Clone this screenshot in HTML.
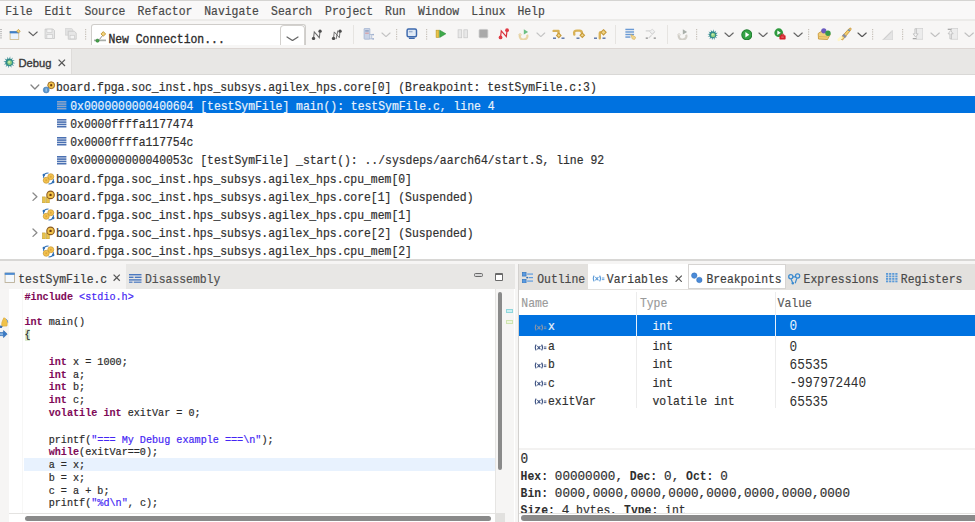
<!DOCTYPE html>
<html><head><meta charset="utf-8"><style>
html,body{margin:0;padding:0;}
body{width:975px;height:522px;overflow:hidden;position:relative;background:#f6f5f4;}
body>div,body>svg{position:absolute;}
.t{white-space:pre;line-height:20px;height:20px;-webkit-text-stroke:0.18px currentColor;}
</style></head><body>
<div style="left:0px;top:0px;width:975px;height:1px;background:#d5d4d2;"></div>
<div style="left:0px;top:1px;width:975px;height:18px;background:#f9f8f8;"></div>
<div style="left:0px;top:19px;width:975px;height:1.5px;background:#ecebe9;"></div>
<div class="t" style="left:5.20px;top:1.86px;font-size:11.42px;color:#484848;font-family:'Liberation Mono', monospace;font-weight:normal;transform:scaleY(1.08);transform-origin:0 13.04px;">File</div>
<div class="t" style="left:44.60px;top:1.86px;font-size:11.42px;color:#484848;font-family:'Liberation Mono', monospace;font-weight:normal;transform:scaleY(1.08);transform-origin:0 13.04px;">Edit</div>
<div class="t" style="left:84.40px;top:1.86px;font-size:11.42px;color:#484848;font-family:'Liberation Mono', monospace;font-weight:normal;transform:scaleY(1.08);transform-origin:0 13.04px;">Source</div>
<div class="t" style="left:137.60px;top:1.86px;font-size:11.42px;color:#484848;font-family:'Liberation Mono', monospace;font-weight:normal;transform:scaleY(1.08);transform-origin:0 13.04px;">Refactor</div>
<div class="t" style="left:204.20px;top:1.86px;font-size:11.42px;color:#484848;font-family:'Liberation Mono', monospace;font-weight:normal;transform:scaleY(1.08);transform-origin:0 13.04px;">Navigate</div>
<div class="t" style="left:271.10px;top:1.86px;font-size:11.42px;color:#484848;font-family:'Liberation Mono', monospace;font-weight:normal;transform:scaleY(1.08);transform-origin:0 13.04px;">Search</div>
<div class="t" style="left:325.10px;top:1.86px;font-size:11.42px;color:#484848;font-family:'Liberation Mono', monospace;font-weight:normal;transform:scaleY(1.08);transform-origin:0 13.04px;">Project</div>
<div class="t" style="left:385.10px;top:1.86px;font-size:11.42px;color:#484848;font-family:'Liberation Mono', monospace;font-weight:normal;transform:scaleY(1.08);transform-origin:0 13.04px;">Run</div>
<div class="t" style="left:418.10px;top:1.86px;font-size:11.42px;color:#484848;font-family:'Liberation Mono', monospace;font-weight:normal;transform:scaleY(1.08);transform-origin:0 13.04px;">Window</div>
<div class="t" style="left:471.30px;top:1.86px;font-size:11.42px;color:#484848;font-family:'Liberation Mono', monospace;font-weight:normal;transform:scaleY(1.08);transform-origin:0 13.04px;">Linux</div>
<div class="t" style="left:517.40px;top:1.86px;font-size:11.42px;color:#484848;font-family:'Liberation Mono', monospace;font-weight:normal;transform:scaleY(1.08);transform-origin:0 13.04px;">Help</div>
<div style="left:0px;top:20.5px;width:975px;height:27.5px;background:#f7f6f5;"></div>
<div style="left:0px;top:48px;width:975px;height:1px;background:#dcd6d3;"></div>
<svg style="left:0.00px;top:28.60px" width="3" height="11" viewBox="0 0 3 11"><rect x="0" y="0.00" width="2" height="1" fill="#bdbdbd"/><rect x="0" y="2.10" width="2" height="1" fill="#bdbdbd"/><rect x="0" y="4.20" width="2" height="1" fill="#bdbdbd"/><rect x="0" y="6.30" width="2" height="1" fill="#bdbdbd"/><rect x="0" y="8.40" width="2" height="1" fill="#bdbdbd"/></svg>
<svg style="left:9.40px;top:28.50px" width="11.6" height="11.6" viewBox="0 0 16 16"><rect x="1.5" y="3.5" width="12" height="11" fill="#eaf3fb" stroke="#c8b27a" stroke-width="1"/><rect x="1" y="3" width="13" height="3" fill="#3d7fc8"/><path d="M13,0.5 L15.5,3 L13,5.5 L10.5,3 Z" fill="#f3d27a" stroke="#b8902c" stroke-width="0.9"/></svg>
<svg style="left:27.70px;top:31.30px" width="10.2" height="5.7" viewBox="0 0 10.2 5.7"><polyline points="1,1 5.1,4.7 9.2,1" fill="none" stroke="#5e5e5e" stroke-width="1.15" stroke-linecap="round" stroke-linejoin="round"/></svg>
<svg style="left:44.20px;top:28.30px" width="11.6" height="11.6" viewBox="0 0 16 16"><path d="M1.5,1.5 H12.5 L14.5,3.5 V14.5 H1.5 Z" fill="#e6e6e6" stroke="#c4c4c4"/><rect x="4" y="1.5" width="7" height="5" fill="#f4f4f4" stroke="#c4c4c4" stroke-width="0.8"/><rect x="4" y="9" width="8" height="5.5" fill="#f4f4f4" stroke="#c4c4c4" stroke-width="0.8"/></svg>
<svg style="left:65.00px;top:28.30px" width="11.6" height="11.6" viewBox="0 0 16 16"><path d="M0.5,0.5 H9 L11,2.5 V10 H0.5 Z" fill="#e2e2e2" stroke="#cdcdcd" stroke-width="0.8"/><path d="M4.5,4.5 H13 L15.5,7 V15.5 H4.5 Z" fill="#e6e6e6" stroke="#c4c4c4"/><rect x="7" y="10" width="6" height="5" fill="#f4f4f4" stroke="#c4c4c4" stroke-width="0.8"/></svg>
<svg style="left:84.80px;top:28.80px" width="2" height="11.400000000000002" viewBox="0 0 2 11.400000000000002"><rect x="0" y="0.00" width="1.2" height="1.2" fill="#c6c0b8"/><rect x="0" y="2.35" width="1.2" height="1.2" fill="#c6c0b8"/><rect x="0" y="4.70" width="1.2" height="1.2" fill="#c6c0b8"/><rect x="0" y="7.05" width="1.2" height="1.2" fill="#c6c0b8"/><rect x="0" y="9.40" width="1.2" height="1.2" fill="#c6c0b8"/></svg>
<div style="left:91px;top:24.2px;width:214.5px;height:21px;background:#ffffff;box-sizing:border-box;border:1px solid #cfcdca;border-bottom:none;border-radius:3px 3px 0 0"></div>
<div style="left:280px;top:25.4px;width:24.7px;height:19.5px;background:#ffffff;box-sizing:border-box;border:1px solid #d3d1ce;border-bottom:none;border-radius:4px 4px 0 0"></div>
<svg style="left:285.80px;top:35.50px" width="13" height="5.6" viewBox="0 0 13 5.6"><polyline points="1,1 6.5,4.6 12,1" fill="none" stroke="#666" stroke-width="1.2" stroke-linecap="round" stroke-linejoin="round"/></svg>
<div class="t" style="left:108.40px;top:29.96px;font-size:11.42px;color:#2b2b2b;font-family:'Liberation Mono', monospace;font-weight:normal;transform:scaleY(1.08);transform-origin:0 13.04px;-webkit-text-stroke:0.3px #2b2b2b;">New Connection...</div>
<svg style="left:93.60px;top:31.40px" width="12.4" height="12.4" viewBox="0 0 16 16"><rect x="0" y="11" width="16" height="2.2" fill="#a9aea9"/><circle cx="4.5" cy="12.5" r="2.1" fill="#46a04a" stroke="#2a7a30" stroke-width="0.7"/><path d="M12,0.8 L15,3.8 L12,6.8 L9,3.8 Z" fill="#f3d27a" stroke="#b8902c" stroke-width="1.1"/><path d="M10.5,6.5 L7,11" stroke="#888" stroke-width="1.2"/></svg>
<svg style="left:310.60px;top:28.70px" width="11.6" height="11.6" viewBox="0 0 16 16"><path d="M3.5,13 L4.5,4 L11.5,12 L12.5,3" fill="none" stroke="#6a6a6a" stroke-width="1.4"/><circle cx="3.5" cy="13" r="2.3" fill="#4e4e4e"/><circle cx="12.5" cy="3" r="2.3" fill="#4e4e4e"/></svg>
<svg style="left:331.20px;top:28.70px" width="11.6" height="11.6" viewBox="0 0 16 16"><path d="M3.5,13 L4.5,4 L11.5,12 L12.5,3 M7,14 L9.5,2" fill="none" stroke="#6a6a6a" stroke-width="1.3"/><circle cx="3.5" cy="13" r="2.3" fill="#4e4e4e"/><circle cx="12.5" cy="3" r="2.3" fill="#4e4e4e"/></svg>
<div style="left:352.5px;top:24.5px;width:1px;height:19px;background:#e6e4e1;"></div>
<svg style="left:362.60px;top:28.30px" width="11.6" height="11.6" viewBox="0 0 16 16"><rect x="1.5" y="0.5" width="8" height="15" rx="1" fill="#c9d3e6" stroke="#9fb0cf"/><rect x="3" y="3" width="5" height="2" fill="#8fa0c2"/><rect x="3" y="6.5" width="5" height="1.2" fill="#d88"/><path d="M9,9 H15 M12,9 V15 M9,15 H15" stroke="#9fb0cf" stroke-width="1"/><circle cx="14" cy="9" r="1.2" fill="#9fb0cf"/><circle cx="14" cy="15" r="1.2" fill="#9fb0cf"/></svg>
<svg style="left:380.60px;top:31.50px" width="10" height="5.6" viewBox="0 0 10 5.6"><polyline points="1,1 5.0,4.6 9,1" fill="none" stroke="#c2c2c2" stroke-width="1.15" stroke-linecap="round" stroke-linejoin="round"/></svg>
<svg style="left:396.00px;top:28.80px" width="2" height="11.400000000000002" viewBox="0 0 2 11.400000000000002"><rect x="0" y="0.00" width="1.2" height="1.2" fill="#c6c0b8"/><rect x="0" y="2.35" width="1.2" height="1.2" fill="#c6c0b8"/><rect x="0" y="4.70" width="1.2" height="1.2" fill="#c6c0b8"/><rect x="0" y="7.05" width="1.2" height="1.2" fill="#c6c0b8"/><rect x="0" y="9.40" width="1.2" height="1.2" fill="#c6c0b8"/></svg>
<svg style="left:406.00px;top:27.70px" width="11.6" height="11.6" viewBox="0 0 16 16"><rect x="1.5" y="1.5" width="13" height="10.5" rx="2" fill="#dfe9f5" stroke="#3c68ad" stroke-width="2"/><rect x="4" y="4" width="5" height="2" fill="#9ab0d0"/><rect x="4" y="13.2" width="8" height="2" fill="#3c68ad"/></svg>
<svg style="left:426.00px;top:28.80px" width="2" height="11.400000000000002" viewBox="0 0 2 11.400000000000002"><rect x="0" y="0.00" width="1.2" height="1.2" fill="#c6c0b8"/><rect x="0" y="2.35" width="1.2" height="1.2" fill="#c6c0b8"/><rect x="0" y="4.70" width="1.2" height="1.2" fill="#c6c0b8"/><rect x="0" y="7.05" width="1.2" height="1.2" fill="#c6c0b8"/><rect x="0" y="9.40" width="1.2" height="1.2" fill="#c6c0b8"/></svg>
<svg style="left:434.80px;top:27.70px" width="11.6" height="11.6" viewBox="0 0 16 16"><rect x="1.5" y="3" width="4" height="10" fill="#e8c54a" stroke="#b89220" stroke-width="0.8"/><path d="M6.5,3 L15,8 L6.5,13 Z" fill="#3faa4a" stroke="#2a8a35" stroke-width="0.8"/></svg>
<svg style="left:457.20px;top:27.90px" width="11.6" height="11.6" viewBox="0 0 16 16"><rect x="1.5" y="2.5" width="5" height="11" fill="#e8e8e8" stroke="#c8c8c8"/><rect x="9.5" y="2.5" width="5" height="11" fill="#e8e8e8" stroke="#c8c8c8"/></svg>
<svg style="left:477.60px;top:28.10px" width="11.6" height="11.6" viewBox="0 0 16 16"><rect x="1.5" y="2" width="12" height="11.5" rx="1.5" fill="#a9a9a9" stroke="#c6c6c6"/></svg>
<svg style="left:497.60px;top:28.10px" width="11.6" height="11.6" viewBox="0 0 16 16"><path d="M3.5,13 L4.5,4 L11.5,12 L12.5,3" fill="none" stroke="#d8303a" stroke-width="1.6"/><circle cx="3.5" cy="13" r="2.6" fill="#e03a44"/><circle cx="12.5" cy="3" r="2.6" fill="#e03a44"/></svg>
<svg style="left:518.20px;top:28.70px" width="11.6" height="11.6" viewBox="0 0 16 16"><path d="M3,7 C1,11 4,15 8,14.5 C12,14 14,11 12.5,8" fill="none" stroke="#e9d6a6" stroke-width="3"/><path d="M1,8 L3,6 L5,8 L3,10 Z" fill="#f0e2bc" stroke="#d8c28a" stroke-width="0.6"/><path d="M8,0.5 L14,4 L8,7.5 Z" fill="#6cc083"/></svg>
<svg style="left:536.00px;top:31.70px" width="9.7" height="5.6" viewBox="0 0 9.7 5.6"><polyline points="1,1 4.85,4.6 8.7,1" fill="none" stroke="#c4c4c4" stroke-width="1.15" stroke-linecap="round" stroke-linejoin="round"/></svg>
<svg style="left:548.00px;top:26.00px" width="60" height="16" viewBox="0 0 60 16"><path d="M5.6,4.9 H10.5 V7.8" fill="none" stroke="#d9b257" stroke-width="2.4" stroke-linecap="round" stroke-linejoin="round"/><path d="M10.8,7.2 L13.0,9.4 L10.8,11.600000000000001 L8.600000000000001,9.4 Z" fill="#f0d68a" stroke="#c79a3a" stroke-width="1.1"/><rect x="5" y="11.5" width="3" height="1.4" fill="#5672a6"/><rect x="13.5" y="11.5" width="3" height="1.4" fill="#5672a6"/><path d="M26.3,8.5 C25.5,5 27,4.6 29,4.6 H31.5 C33.5,4.6 34,6 34,7.5" fill="none" stroke="#d9b257" stroke-width="2.4" stroke-linecap="round"/><path d="M34.3,7.1000000000000005 L36.5,9.3 L34.3,11.5 L32.099999999999994,9.3 Z" fill="#f0d68a" stroke="#c79a3a" stroke-width="1.1"/><rect x="28.5" y="11.5" width="3" height="1.4" fill="#5672a6"/><path d="M51.8,12.2 V7 C51.8,6.2 52.5,6.2 53,6.2" fill="none" stroke="#d9b257" stroke-width="2.4" stroke-linecap="round"/><path d="M55.5,3.6999999999999997 L58.1,6.3 L55.5,8.9 L52.9,6.3 Z" fill="#f0d68a" stroke="#c79a3a" stroke-width="1.1"/><rect x="46" y="11.5" width="3" height="1.4" fill="#5672a6"/><rect x="54.5" y="11.5" width="3" height="1.4" fill="#5672a6"/></svg>
<div style="left:615.0px;top:24.5px;width:1px;height:19px;background:#e6e4e1;"></div>
<svg style="left:624.80px;top:28.30px" width="11.6" height="11.6" viewBox="0 0 16 16"><rect x="0.5" y="1" width="12" height="2" fill="#6a9ad4"/><rect x="0.5" y="4.5" width="12" height="2" fill="#6a9ad4"/><rect x="0.5" y="8" width="12" height="2" fill="#6a9ad4"/><rect x="0.5" y="11.5" width="7" height="2" fill="#6a9ad4"/><path d="M8,9 L12,11 L15,13 L13,16 L10,15 Z" fill="#f2d68c" stroke="#d2aa52" stroke-width="0.8"/></svg>
<svg style="left:645.00px;top:28.30px" width="11.6" height="11.6" viewBox="0 0 16 16"><path d="M1,4 H7 M7,4 L10,8 L13,5" fill="none" stroke="#d4d4d4" stroke-width="2"/><path d="M10,1.5 L13.5,5 L10,8.5 L6.5,5 Z" fill="#f0f0f0" stroke="#cfcfcf"/><rect x="1" y="13" width="3" height="2" fill="#9a9a9a"/><rect x="12" y="13" width="3" height="2" fill="#9a9a9a"/><path d="M5,14 L9,10" stroke="#d4d4d4" stroke-width="1.5"/></svg>
<div style="left:666.6px;top:24.5px;width:1px;height:19px;background:#e6e4e1;"></div>
<svg style="left:677.00px;top:28.70px" width="11.6" height="11.6" viewBox="0 0 16 16"><path d="M3,7 C1,11 4,15 8,14.5 C12,14 14,11 12.5,8" fill="none" stroke="#d2cfc8" stroke-width="3"/><path d="M1,8 L3,6 L5,8 L3,10 Z" fill="#e9e7e2" stroke="#c6c3bb" stroke-width="0.6"/><path d="M8,0.5 L14,4 L8,7.5 Z" fill="#a9afa9"/></svg>
<svg style="left:696.40px;top:28.80px" width="2" height="11.400000000000002" viewBox="0 0 2 11.400000000000002"><rect x="0" y="0.00" width="1.2" height="1.2" fill="#c6c0b8"/><rect x="0" y="2.35" width="1.2" height="1.2" fill="#c6c0b8"/><rect x="0" y="4.70" width="1.2" height="1.2" fill="#c6c0b8"/><rect x="0" y="7.05" width="1.2" height="1.2" fill="#c6c0b8"/><rect x="0" y="9.40" width="1.2" height="1.2" fill="#c6c0b8"/></svg>
<svg style="left:706.60px;top:28.70px" width="11.6" height="11.6" viewBox="0 0 16 16"><polygon points="11.98,7.58 15.53,9.06 11.71,9.50 11.65,9.63 13.99,12.68 10.46,11.15 10.35,11.24 10.85,15.05 8.56,11.96 8.42,11.98 6.94,15.53 6.50,11.71 6.37,11.65 3.32,13.99 4.85,10.46 4.76,10.35 0.95,10.85 4.04,8.56 4.02,8.42 0.47,6.94 4.29,6.50 4.35,6.37 2.01,3.32 5.54,4.85 5.65,4.76 5.15,0.95 7.44,4.04 7.58,4.02 9.06,0.47 9.50,4.29 9.63,4.35 12.68,2.01 11.15,5.54 11.24,5.65 15.05,5.15 11.96,7.44" fill="#3a8f95"/><circle cx="8" cy="8" r="4.6" fill="#2f8a8a"/><circle cx="8.4" cy="8.4" r="3" fill="#8fcf80"/><circle cx="7.8" cy="7.6" r="1.4" fill="#cdeeb0"/></svg>
<svg style="left:724.00px;top:31.50px" width="10.2" height="5.8" viewBox="0 0 10.2 5.8"><polyline points="1,1 5.1,4.8 9.2,1" fill="none" stroke="#666" stroke-width="1.15" stroke-linecap="round" stroke-linejoin="round"/></svg>
<svg style="left:740.60px;top:28.70px" width="11.6" height="11.6" viewBox="0 0 16 16"><circle cx="8" cy="8" r="7.6" fill="#1f7a2e"/><circle cx="8" cy="8" r="6.4" fill="#34a345"/><path d="M6,4.2 L11.5,8 L6,11.8 Z" fill="#fff"/></svg>
<svg style="left:758.40px;top:31.50px" width="10.2" height="5.8" viewBox="0 0 10.2 5.8"><polyline points="1,1 5.1,4.8 9.2,1" fill="none" stroke="#666" stroke-width="1.15" stroke-linecap="round" stroke-linejoin="round"/></svg>
<svg style="left:774.30px;top:28.30px" width="11.6" height="11.6" viewBox="0 0 16 16"><circle cx="6.5" cy="6.5" r="6" fill="#2f9a3e"/><path d="M4.6,3.5 L9.4,6.5 L4.6,9.5 Z" fill="#fff"/><rect x="7.5" y="10" width="8.5" height="6" rx="1" fill="#d4202a"/><rect x="10" y="8.5" width="3.5" height="2" fill="none" stroke="#d4202a" stroke-width="1"/><rect x="10" y="12" width="3.5" height="1" fill="#f4a0a0"/></svg>
<svg style="left:792.80px;top:31.50px" width="10.2" height="5.8" viewBox="0 0 10.2 5.8"><polyline points="1,1 5.1,4.8 9.2,1" fill="none" stroke="#666" stroke-width="1.15" stroke-linecap="round" stroke-linejoin="round"/></svg>
<svg style="left:808.40px;top:28.80px" width="2" height="11.400000000000002" viewBox="0 0 2 11.400000000000002"><rect x="0" y="0.00" width="1.2" height="1.2" fill="#c6c0b8"/><rect x="0" y="2.35" width="1.2" height="1.2" fill="#c6c0b8"/><rect x="0" y="4.70" width="1.2" height="1.2" fill="#c6c0b8"/><rect x="0" y="7.05" width="1.2" height="1.2" fill="#c6c0b8"/><rect x="0" y="9.40" width="1.2" height="1.2" fill="#c6c0b8"/></svg>
<svg style="left:812.00px;top:24.00px" width="22" height="18" viewBox="0 0 22 18"><path d="M6.2,9.5 L10,7 L18.2,10.5 L15.5,15.5 L6.5,15 Z" fill="#f2cf7c" stroke="#c99a3c" stroke-width="0.9" stroke-linejoin="round"/><path d="M6.5,12.5 L15.8,13" stroke="#d9ae52" stroke-width="0.8"/><circle cx="11.8" cy="6.8" r="2.6" fill="#6b5bbf"/><circle cx="16" cy="9.3" r="2.7" fill="#3a9a48"/></svg>
<svg style="left:834.00px;top:24.00px" width="20" height="18" viewBox="0 0 20 18"><path d="M6.2,14.5 L14.5,5.2 C15.5,4.2 16.5,4 17,4.2 C17.2,5 17,6 16,7 L8.5,16 Z" fill="#f3cf72" stroke="#c8963a" stroke-width="0.9" stroke-linejoin="round"/><path d="M9,10.6 L11.8,13.2" stroke="#8a8fa0" stroke-width="2.6"/><path d="M4.8,15.8 L7.2,13.4" stroke="#fff6c8" stroke-width="2.8" stroke-linecap="round"/><circle cx="15" cy="6.2" r="0.9" fill="#5a8ab8"/></svg>
<svg style="left:856.60px;top:31.60px" width="10.2" height="5.8" viewBox="0 0 10.2 5.8"><polyline points="1,1 5.1,4.8 9.2,1" fill="none" stroke="#555" stroke-width="1.15" stroke-linecap="round" stroke-linejoin="round"/></svg>
<svg style="left:872.40px;top:28.80px" width="2" height="11.400000000000002" viewBox="0 0 2 11.400000000000002"><rect x="0" y="0.00" width="1.2" height="1.2" fill="#c6c0b8"/><rect x="0" y="2.35" width="1.2" height="1.2" fill="#c6c0b8"/><rect x="0" y="4.70" width="1.2" height="1.2" fill="#c6c0b8"/><rect x="0" y="7.05" width="1.2" height="1.2" fill="#c6c0b8"/><rect x="0" y="9.40" width="1.2" height="1.2" fill="#c6c0b8"/></svg>
<svg style="left:881.60px;top:28.50px" width="11.6" height="11.6" viewBox="0 0 16 16"><path d="M1,15 L14,2 L15,3 L15,15 Z" fill="#e4e4e4" stroke="#cfcfcf"/><path d="M3,14 L13,4" stroke="#c4c4c4" stroke-width="1"/></svg>
<svg style="left:902.00px;top:28.80px" width="2" height="11.400000000000002" viewBox="0 0 2 11.400000000000002"><rect x="0" y="0.00" width="1.2" height="1.2" fill="#c6c0b8"/><rect x="0" y="2.35" width="1.2" height="1.2" fill="#c6c0b8"/><rect x="0" y="4.70" width="1.2" height="1.2" fill="#c6c0b8"/><rect x="0" y="7.05" width="1.2" height="1.2" fill="#c6c0b8"/><rect x="0" y="9.40" width="1.2" height="1.2" fill="#c6c0b8"/></svg>
<svg style="left:911.80px;top:28.30px" width="11.6" height="11.6" viewBox="0 0 16 16"><rect x="6" y="0.5" width="9" height="15" fill="#ececec" stroke="#cfcfcf"/><path d="M4,1 V8 H1.5 L5,12.5 L8.5,8 H6 V1 Z" fill="#f2f2f2" stroke="#b8b8b8"/><rect x="1" y="14" width="5" height="1.5" fill="#9a9a9a"/></svg>
<svg style="left:929.60px;top:31.70px" width="10.3" height="5.7" viewBox="0 0 10.3 5.7"><polyline points="1,1 5.15,4.7 9.3,1" fill="none" stroke="#c0c0c0" stroke-width="1.15" stroke-linecap="round" stroke-linejoin="round"/></svg>
<svg style="left:946.60px;top:28.30px" width="11.6" height="11.6" viewBox="0 0 16 16"><rect x="6" y="0.5" width="9" height="15" fill="#ececec" stroke="#cfcfcf"/><path d="M4,15 V8 H1.5 L5,3.5 L8.5,8 H6 V15 Z" fill="#f2f2f2" stroke="#b8b8b8"/><rect x="1" y="1" width="5" height="1.5" fill="#9a9a9a"/></svg>
<svg style="left:964.00px;top:31.70px" width="10.3" height="5.7" viewBox="0 0 10.3 5.7"><polyline points="1,1 5.15,4.7 9.3,1" fill="none" stroke="#c0c0c0" stroke-width="1.15" stroke-linecap="round" stroke-linejoin="round"/></svg>
<div style="left:0px;top:49px;width:975px;height:26px;background:#e8e7e5;"></div>
<div style="left:0px;top:49px;width:71px;height:26px;background:#f5f4f3;"></div>
<div style="left:71px;top:49px;width:1px;height:26px;background:#dedcda;"></div>
<div style="left:0px;top:74px;width:975px;height:1px;background:#d9d8d6;"></div>
<div class="t" style="left:18.50px;top:52.82px;font-size:11.2px;color:#383838;font-family:'Liberation Sans', sans-serif;font-weight:normal;-webkit-text-stroke:0.35px #383838;">Debug</div>
<svg style="left:3.20px;top:55.80px" width="12.6" height="12.6" viewBox="0 0 16 16"><polygon points="11.98,7.58 15.53,9.06 11.71,9.50 11.65,9.63 13.99,12.68 10.46,11.15 10.35,11.24 10.85,15.05 8.56,11.96 8.42,11.98 6.94,15.53 6.50,11.71 6.37,11.65 3.32,13.99 4.85,10.46 4.76,10.35 0.95,10.85 4.04,8.56 4.02,8.42 0.47,6.94 4.29,6.50 4.35,6.37 2.01,3.32 5.54,4.85 5.65,4.76 5.15,0.95 7.44,4.04 7.58,4.02 9.06,0.47 9.50,4.29 9.63,4.35 12.68,2.01 11.15,5.54 11.24,5.65 15.05,5.15 11.96,7.44" fill="#3a8f95"/><circle cx="8" cy="8" r="4.6" fill="#2f8a8a"/><circle cx="8.4" cy="8.4" r="3" fill="#8fcf80"/><circle cx="7.8" cy="7.6" r="1.4" fill="#cdeeb0"/></svg>
<svg style="left:58.40px;top:59.20px" width="7.6" height="7.6" viewBox="0 0 7.6 7.6"><path d="M0.6,0.6 L7.0,7.0 M7.0,0.6 L0.6,7.0" stroke="#555" stroke-width="1.2" fill="none"/></svg>
<div style="left:0px;top:75px;width:975px;height:184px;background:#ffffff;"></div>
<div style="left:0px;top:95.7px;width:975px;height:17.8px;background:#0072e0;"></div>
<div class="t" style="left:56.00px;top:78.46px;font-size:11.42px;color:#2f2f2f;font-family:'Liberation Mono', monospace;font-weight:normal;transform:scaleY(1.08);transform-origin:0 13.04px;">board.fpga.soc_inst.hps_subsys.agilex_hps.core[0] (Breakpoint: testSymFile.c:3)</div>
<div class="t" style="left:70.20px;top:96.68px;font-size:11.42px;color:#eaf2fc;font-family:'Liberation Mono', monospace;font-weight:normal;transform:scaleY(1.08);transform-origin:0 13.04px;">0x0000000000400604 [testSymFile] main(): testSymFile.c, line 4</div>
<div class="t" style="left:70.20px;top:114.90px;font-size:11.42px;color:#2f2f2f;font-family:'Liberation Mono', monospace;font-weight:normal;transform:scaleY(1.08);transform-origin:0 13.04px;">0x0000ffffa1177474</div>
<div class="t" style="left:70.20px;top:133.12px;font-size:11.42px;color:#2f2f2f;font-family:'Liberation Mono', monospace;font-weight:normal;transform:scaleY(1.08);transform-origin:0 13.04px;">0x0000ffffa117754c</div>
<div class="t" style="left:70.20px;top:151.34px;font-size:11.42px;color:#2f2f2f;font-family:'Liberation Mono', monospace;font-weight:normal;transform:scaleY(1.08);transform-origin:0 13.04px;">0x000000000040053c [testSymFile] _start(): ../sysdeps/aarch64/start.S, line 92</div>
<div class="t" style="left:56.00px;top:169.56px;font-size:11.42px;color:#2f2f2f;font-family:'Liberation Mono', monospace;font-weight:normal;transform:scaleY(1.08);transform-origin:0 13.04px;">board.fpga.soc_inst.hps_subsys.agilex_hps.cpu_mem[0]</div>
<div class="t" style="left:56.00px;top:187.78px;font-size:11.42px;color:#2f2f2f;font-family:'Liberation Mono', monospace;font-weight:normal;transform:scaleY(1.08);transform-origin:0 13.04px;">board.fpga.soc_inst.hps_subsys.agilex_hps.core[1] (Suspended)</div>
<div class="t" style="left:56.00px;top:206.00px;font-size:11.42px;color:#2f2f2f;font-family:'Liberation Mono', monospace;font-weight:normal;transform:scaleY(1.08);transform-origin:0 13.04px;">board.fpga.soc_inst.hps_subsys.agilex_hps.cpu_mem[1]</div>
<div class="t" style="left:56.00px;top:224.22px;font-size:11.42px;color:#2f2f2f;font-family:'Liberation Mono', monospace;font-weight:normal;transform:scaleY(1.08);transform-origin:0 13.04px;">board.fpga.soc_inst.hps_subsys.agilex_hps.core[2] (Suspended)</div>
<div class="t" style="left:56.00px;top:242.44px;font-size:11.42px;color:#2f2f2f;font-family:'Liberation Mono', monospace;font-weight:normal;transform:scaleY(1.08);transform-origin:0 13.04px;">board.fpga.soc_inst.hps_subsys.agilex_hps.cpu_mem[2]</div>
<svg style="left:30.10px;top:83.90px" width="9.8" height="6.0" viewBox="0 0 9.8 6.0"><polyline points="1,1 4.9,5.0 8.8,1" fill="none" stroke="#858585" stroke-width="1.3" stroke-linecap="round" stroke-linejoin="round"/></svg>
<svg style="left:41.60px;top:80.20px" width="14" height="14" viewBox="0 0 16 16"><circle cx="10.5" cy="6" r="3.9" fill="#f1c34a" stroke="#9a6a2a" stroke-width="1.1"/><circle cx="10.5" cy="6" r="1.3" fill="#6a3a10"/><circle cx="4.8" cy="11.4" r="3.4" fill="#5b95c9" stroke="#4a80b8" stroke-width="0.7"/><rect x="4" y="9.6" width="1.6" height="3.6" fill="#9cc4e8"/></svg>
<svg style="left:57.40px;top:101.00px" width="10" height="9" viewBox="0 0 10 9"><rect x="0" y="0.0" width="9.4" height="1.6" fill="#8aa4c8"/><rect x="0" y="2.3" width="9.4" height="1.6" fill="#8aa4c8"/><rect x="0" y="4.6" width="9.4" height="1.6" fill="#8aa4c8"/><rect x="0" y="6.9" width="9.4" height="1.6" fill="#8aa4c8"/></svg>
<svg style="left:57.40px;top:119.22px" width="10" height="9" viewBox="0 0 10 9"><rect x="0" y="0.0" width="9.4" height="1.6" fill="#4a70b2"/><rect x="0" y="2.3" width="9.4" height="1.6" fill="#4a70b2"/><rect x="0" y="4.6" width="9.4" height="1.6" fill="#4a70b2"/><rect x="0" y="6.9" width="9.4" height="1.6" fill="#4a70b2"/></svg>
<svg style="left:57.40px;top:137.44px" width="10" height="9" viewBox="0 0 10 9"><rect x="0" y="0.0" width="9.4" height="1.6" fill="#4a70b2"/><rect x="0" y="2.3" width="9.4" height="1.6" fill="#4a70b2"/><rect x="0" y="4.6" width="9.4" height="1.6" fill="#4a70b2"/><rect x="0" y="6.9" width="9.4" height="1.6" fill="#4a70b2"/></svg>
<svg style="left:57.40px;top:155.66px" width="10" height="9" viewBox="0 0 10 9"><rect x="0" y="0.0" width="9.4" height="1.6" fill="#4a70b2"/><rect x="0" y="2.3" width="9.4" height="1.6" fill="#4a70b2"/><rect x="0" y="4.6" width="9.4" height="1.6" fill="#4a70b2"/><rect x="0" y="6.9" width="9.4" height="1.6" fill="#4a70b2"/></svg>
<svg style="left:41.80px;top:171.80px" width="13" height="13" viewBox="0 0 16 16"><path d="M1.8,7 C1.8,3 4.5,1.2 8,1.2" fill="none" stroke="#2f6fb5" stroke-width="1.4"/><circle cx="2.2" cy="3.6" r="1.5" fill="#2f6fb5"/><path d="M14.2,9 C14.2,13 11.5,14.8 8,14.8" fill="none" stroke="#2f6fb5" stroke-width="1.4"/><circle cx="13.8" cy="12.4" r="1.5" fill="#2f6fb5"/><circle cx="10.8" cy="5.8" r="3.7" fill="#f3c24c" stroke="#c89a3a" stroke-width="0.9"/><circle cx="5.2" cy="10.2" r="3.7" fill="#f3c24c" stroke="#c89a3a" stroke-width="0.9"/><circle cx="10.8" cy="5.8" r="1.2" fill="#dca640"/><circle cx="5.2" cy="10.2" r="1.2" fill="#dca640"/></svg>
<svg style="left:41.80px;top:208.24px" width="13" height="13" viewBox="0 0 16 16"><path d="M1.8,7 C1.8,3 4.5,1.2 8,1.2" fill="none" stroke="#2f6fb5" stroke-width="1.4"/><circle cx="2.2" cy="3.6" r="1.5" fill="#2f6fb5"/><path d="M14.2,9 C14.2,13 11.5,14.8 8,14.8" fill="none" stroke="#2f6fb5" stroke-width="1.4"/><circle cx="13.8" cy="12.4" r="1.5" fill="#2f6fb5"/><circle cx="10.8" cy="5.8" r="3.7" fill="#f3c24c" stroke="#c89a3a" stroke-width="0.9"/><circle cx="5.2" cy="10.2" r="3.7" fill="#f3c24c" stroke="#c89a3a" stroke-width="0.9"/><circle cx="10.8" cy="5.8" r="1.2" fill="#dca640"/><circle cx="5.2" cy="10.2" r="1.2" fill="#dca640"/></svg>
<svg style="left:41.80px;top:244.68px" width="13" height="13" viewBox="0 0 16 16"><path d="M1.8,7 C1.8,3 4.5,1.2 8,1.2" fill="none" stroke="#2f6fb5" stroke-width="1.4"/><circle cx="2.2" cy="3.6" r="1.5" fill="#2f6fb5"/><path d="M14.2,9 C14.2,13 11.5,14.8 8,14.8" fill="none" stroke="#2f6fb5" stroke-width="1.4"/><circle cx="13.8" cy="12.4" r="1.5" fill="#2f6fb5"/><circle cx="10.8" cy="5.8" r="3.7" fill="#f3c24c" stroke="#c89a3a" stroke-width="0.9"/><circle cx="5.2" cy="10.2" r="3.7" fill="#f3c24c" stroke="#c89a3a" stroke-width="0.9"/><circle cx="10.8" cy="5.8" r="1.2" fill="#dca640"/><circle cx="5.2" cy="10.2" r="1.2" fill="#dca640"/></svg>
<svg style="left:42.40px;top:190.00px" width="13" height="13" viewBox="0 0 16 16"><rect x="0.5" y="8.5" width="3.6" height="7.5" fill="#e8c24a" stroke="#b8962a" stroke-width="0.6"/><rect x="5.4" y="8.5" width="3.6" height="7.5" fill="#e8c24a" stroke="#b8962a" stroke-width="0.6"/><circle cx="10.5" cy="6" r="4.6" fill="#f1c34a" stroke="#8a5a20" stroke-width="1.3"/><circle cx="10.5" cy="6" r="1.5" fill="#6a3a10"/></svg>
<svg style="left:32.30px;top:191.60px" width="5.9" height="9.4" viewBox="0 0 5.9 9.4"><polyline points="1,1 4.9,4.7 1,8.4" fill="none" stroke="#8a8a8a" stroke-width="1.3" stroke-linecap="round" stroke-linejoin="round"/></svg>
<svg style="left:42.40px;top:226.44px" width="13" height="13" viewBox="0 0 16 16"><rect x="0.5" y="8.5" width="3.6" height="7.5" fill="#e8c24a" stroke="#b8962a" stroke-width="0.6"/><rect x="5.4" y="8.5" width="3.6" height="7.5" fill="#e8c24a" stroke="#b8962a" stroke-width="0.6"/><circle cx="10.5" cy="6" r="4.6" fill="#f1c34a" stroke="#8a5a20" stroke-width="1.3"/><circle cx="10.5" cy="6" r="1.5" fill="#6a3a10"/></svg>
<svg style="left:32.30px;top:228.04px" width="5.9" height="9.4" viewBox="0 0 5.9 9.4"><polyline points="1,1 4.9,4.7 1,8.4" fill="none" stroke="#8a8a8a" stroke-width="1.3" stroke-linecap="round" stroke-linejoin="round"/></svg>
<div style="left:0px;top:259px;width:975px;height:1.5px;background:#d8d7d5;"></div>
<div style="left:0px;top:260.5px;width:975px;height:3.8px;background:#f6f5f4;"></div>
<div style="left:0px;top:264.3px;width:514.5px;height:25px;background:#e8e7e5;"></div>
<div style="left:0px;top:264.3px;width:126px;height:25px;background:#f5f4f3;"></div>
<div style="left:514.5px;top:264.3px;width:3.3px;height:258px;background:#f6f5f4;"></div>
<div class="t" style="left:18.20px;top:269.56px;font-size:11.42px;color:#3c3c3c;font-family:'Liberation Mono', monospace;font-weight:normal;transform:scaleY(1.08);transform-origin:0 13.04px;">testSymFile.c</div>
<div class="t" style="left:145.00px;top:269.56px;font-size:11.42px;color:#505050;font-family:'Liberation Mono', monospace;font-weight:normal;transform:scaleY(1.08);transform-origin:0 13.04px;">Disassembly</div>
<div style="left:0px;top:289.3px;width:514.5px;height:233px;background:#ffffff;"></div>
<div style="left:0px;top:289.3px;width:9.4px;height:233px;background:#f6f5f4;"></div>
<div style="left:494.8px;top:289.3px;width:19.7px;height:233px;background:#f6f5f4;"></div>
<div style="left:494.8px;top:289.3px;width:1px;height:233px;background:#e6e5e3;"></div>
<svg style="left:3.60px;top:272.20px" width="11.5" height="11.5" viewBox="0 0 16 16"><rect x="1.5" y="1.5" width="13" height="13" fill="#f4f8fc" stroke="#b8ad94" stroke-width="1.2"/><rect x="1" y="1" width="14" height="3" fill="#4c8ad0"/></svg>
<svg style="left:113.20px;top:274.40px" width="7.4" height="7.4" viewBox="0 0 7.4 7.4"><path d="M0.6,0.6 L6.800000000000001,6.800000000000001 M6.800000000000001,0.6 L0.6,6.800000000000001" stroke="#555" stroke-width="1.2" fill="none"/></svg>
<svg style="left:128.80px;top:274.20px" width="13" height="9" viewBox="0 0 13 9"><rect x="0" y="0" width="12.5" height="1.4" fill="#4a78c0"/><rect x="0" y="2.6" width="4.5" height="1.4" fill="#4a78c0"/><rect x="5.8" y="2.6" width="6.7" height="1.4" fill="#4a78c0"/><rect x="0" y="5.2" width="12.5" height="1.4" fill="#4a78c0"/><rect x="0" y="7.6" width="3.5" height="1.2" fill="#4a78c0"/><rect x="4.8" y="7.6" width="7.7" height="1.2" fill="#4a78c0"/></svg>
<div style="left:474.2px;top:273.0px;width:8.4px;height:3.8px;background:#d8d8d8;box-sizing:border-box;border:1.3px solid #6a6a6a;border-radius:1.5px"></div>
<div style="left:494.8px;top:273.0px;width:8.2px;height:8.2px;background:#ffffff;box-sizing:border-box;border:1.3px solid #6a6a6a;border-top-width:2.4px;border-radius:1px"></div>
<div style="left:505.6px;top:309.0px;width:7.4px;height:4.0px;background:#cdeff2;box-sizing:border-box;border:1px solid #8fd6dc"></div>
<div style="left:505.6px;top:319.7px;width:7.4px;height:4.0px;background:#eef6df;box-sizing:border-box;border:1px solid #cfe4b0"></div>
<svg style="left:0.00px;top:317.40px" width="9" height="12" viewBox="0 0 9 12"><path d="M3.8,0.8 Q5.5,1 7.5,3.5 L7,9 L1.8,9.2 Q0.8,6 3.8,0.8 Z" fill="#f0c24a" stroke="#d8a83a" stroke-width="0.6"/><path d="M6.2,2 Q7.8,3.5 7.8,5.5" fill="none" stroke="#7aa0d0" stroke-width="1"/><path d="M0,8.5 L2.6,9 L1.8,11 L0,11 Z" fill="#3a70b8"/></svg>
<svg style="left:0.00px;top:330.00px" width="9" height="9" viewBox="0 0 9 9"><path d="M0,2.6 H3.2 L3.6,0.6 L7.2,4 L3.6,7.6 L3.2,5.6 H0 Z" fill="#3a7ac4" stroke="#2f6ab0" stroke-width="0.6"/><rect x="0" y="3.4" width="3" height="1.4" fill="#9cc4ec"/></svg>
<div style="left:22.0px;top:289.3px;width:1px;height:224px;background:#f7f7f6;"></div>
<div style="left:23.5px;top:458px;width:471.3px;height:12.6px;background:#e8f2fe;"></div>
<div style="left:24.7px;top:329.2px;width:5.6px;height:12.1px;background:#dcebd3;"></div>
<div class="t" style="left:24.40px;top:287.80px;font-size:10.13px;color:#2a2a2a;font-family:'Liberation Mono', monospace;transform:scaleY(1.15);transform-origin:0 12.70px;"><b style="color:#7f0a58;-webkit-text-stroke:0.1px #7f0a58">#include</b> <span style="color:#4426f4">&lt;stdio.h&gt;</span></div>
<div class="t" style="left:24.40px;top:313.30px;font-size:10.13px;color:#2a2a2a;font-family:'Liberation Mono', monospace;transform:scaleY(1.15);transform-origin:0 12.70px;"><b style="color:#7f0a58;-webkit-text-stroke:0.1px #7f0a58">int</b> main()</div>
<div class="t" style="left:24.40px;top:326.30px;font-size:10.13px;color:#2a2a2a;font-family:'Liberation Mono', monospace;transform:scaleY(1.15);transform-origin:0 12.70px;">{</div>
<div class="t" style="left:48.72px;top:352.70px;font-size:10.13px;color:#2a2a2a;font-family:'Liberation Mono', monospace;transform:scaleY(1.15);transform-origin:0 12.70px;"><b style="color:#7f0a58;-webkit-text-stroke:0.1px #7f0a58">int</b> x = 1000;</div>
<div class="t" style="left:48.72px;top:365.60px;font-size:10.13px;color:#2a2a2a;font-family:'Liberation Mono', monospace;transform:scaleY(1.15);transform-origin:0 12.70px;"><b style="color:#7f0a58;-webkit-text-stroke:0.1px #7f0a58">int</b> a;</div>
<div class="t" style="left:48.72px;top:378.40px;font-size:10.13px;color:#2a2a2a;font-family:'Liberation Mono', monospace;transform:scaleY(1.15);transform-origin:0 12.70px;"><b style="color:#7f0a58;-webkit-text-stroke:0.1px #7f0a58">int</b> b;</div>
<div class="t" style="left:48.72px;top:391.20px;font-size:10.13px;color:#2a2a2a;font-family:'Liberation Mono', monospace;transform:scaleY(1.15);transform-origin:0 12.70px;"><b style="color:#7f0a58;-webkit-text-stroke:0.1px #7f0a58">int</b> c;</div>
<div class="t" style="left:48.72px;top:404.00px;font-size:10.13px;color:#2a2a2a;font-family:'Liberation Mono', monospace;transform:scaleY(1.15);transform-origin:0 12.70px;"><b style="color:#7f0a58;-webkit-text-stroke:0.1px #7f0a58">volatile</b> <b style="color:#7f0a58;-webkit-text-stroke:0.1px #7f0a58">int</b> exitVar = 0;</div>
<div class="t" style="left:48.72px;top:430.60px;font-size:10.13px;color:#2a2a2a;font-family:'Liberation Mono', monospace;transform:scaleY(1.15);transform-origin:0 12.70px;">printf(<span style="color:#4426f4">"=== My Debug example ===\n"</span>);</div>
<div class="t" style="left:48.72px;top:443.10px;font-size:10.13px;color:#2a2a2a;font-family:'Liberation Mono', monospace;transform:scaleY(1.15);transform-origin:0 12.70px;"><b style="color:#7f0a58;-webkit-text-stroke:0.1px #7f0a58">while</b>(exitVar==0);</div>
<div class="t" style="left:48.72px;top:455.90px;font-size:10.13px;color:#2a2a2a;font-family:'Liberation Mono', monospace;transform:scaleY(1.15);transform-origin:0 12.70px;">a = x;</div>
<div class="t" style="left:48.72px;top:468.70px;font-size:10.13px;color:#2a2a2a;font-family:'Liberation Mono', monospace;transform:scaleY(1.15);transform-origin:0 12.70px;">b = x;</div>
<div class="t" style="left:48.72px;top:481.60px;font-size:10.13px;color:#2a2a2a;font-family:'Liberation Mono', monospace;transform:scaleY(1.15);transform-origin:0 12.70px;">c = a + b;</div>
<div class="t" style="left:48.72px;top:494.40px;font-size:10.13px;color:#2a2a2a;font-family:'Liberation Mono', monospace;transform:scaleY(1.15);transform-origin:0 12.70px;">printf(<span style="color:#4426f4">"%d\n"</span>, c);</div>
<div style="left:9.4px;top:512.5px;width:485.4px;height:1px;background:#e4e3e1;"></div>
<div style="left:25px;top:515.7px;width:466.4px;height:5px;background:#8a8a8a;border-radius:3px"></div>
<div style="left:495.3px;top:513.3px;width:9.5px;height:8.7px;background:#e2e1df;"></div>
<div style="left:497.5px;top:292.2px;width:4.7px;height:178px;background:#8a8a8a;border-radius:3px"></div>
<div style="left:517.8px;top:264.3px;width:457.2px;height:25.3px;background:#e3e1de;"></div>
<div style="left:517.8px;top:264.3px;width:1px;height:258px;background:#d3d1cf;"></div>
<div style="left:588px;top:264.3px;width:100.4px;height:25px;background:#ffffff;"></div>
<div style="left:688.4px;top:264.3px;width:97.4px;height:25px;background:#ffffff;box-sizing:border-box;border:1px solid #d6d4d2"></div>
<div class="t" style="left:537.20px;top:269.76px;font-size:11.42px;color:#484848;font-family:'Liberation Mono', monospace;font-weight:normal;transform:scaleY(1.08);transform-origin:0 13.04px;">Outline</div>
<div class="t" style="left:606.80px;top:269.76px;font-size:11.42px;color:#3c3c3c;font-family:'Liberation Mono', monospace;font-weight:normal;transform:scaleY(1.08);transform-origin:0 13.04px;">Variables</div>
<div class="t" style="left:706.40px;top:269.76px;font-size:11.42px;color:#3c3c3c;font-family:'Liberation Mono', monospace;font-weight:normal;transform:scaleY(1.08);transform-origin:0 13.04px;">Breakpoints</div>
<div class="t" style="left:803.60px;top:269.76px;font-size:11.42px;color:#484848;font-family:'Liberation Mono', monospace;font-weight:normal;transform:scaleY(1.08);transform-origin:0 13.04px;">Expressions</div>
<div class="t" style="left:900.80px;top:269.76px;font-size:11.42px;color:#484848;font-family:'Liberation Mono', monospace;font-weight:normal;transform:scaleY(1.08);transform-origin:0 13.04px;">Registers</div>
<div style="left:518.8px;top:289.6px;width:456.2px;height:233px;background:#ffffff;"></div>
<svg style="left:521.60px;top:271.60px" width="11.8" height="11.8" viewBox="0 0 16 16"><rect x="0.5" y="0.5" width="5" height="5" fill="#5a9ae0" stroke="#3a7ac0"/><rect x="0.5" y="10" width="5" height="5" fill="#5a9ae0" stroke="#3a7ac0"/><rect x="7" y="2" width="8" height="1.6" fill="#5a9ae0"/><rect x="7" y="11.5" width="8" height="1.6" fill="#5a9ae0"/><rect x="9" y="6.8" width="6" height="1.6" fill="#5a9ae0"/><circle cx="7" cy="7.6" r="1.3" fill="#2a6ab0"/></svg>
<svg style="left:591.60px;top:275.00px" width="13" height="7" viewBox="0 0 13 7"><g fill="none" stroke="#5a9ad8" stroke-width="1.1"><path d="M2.2,0.6 Q0.4,3.5 2.2,6.4"/><path d="M3.4,2 L6.4,5.4 M6.4,2 L3.4,5.4"/><path d="M7.6,0.6 Q9.4,3.5 7.6,6.4"/><path d="M9.8,3 H12.4 M9.8,4.6 H12.4" stroke-width="0.9"/></g></svg>
<svg style="left:675.00px;top:275.00px" width="7.4" height="7.4" viewBox="0 0 7.4 7.4"><path d="M0.6,0.6 L6.800000000000001,6.800000000000001 M6.800000000000001,0.6 L0.6,6.800000000000001" stroke="#555" stroke-width="1.2" fill="none"/></svg>
<svg style="left:691.20px;top:272.40px" width="11.6" height="11.6" viewBox="0 0 16 16"><circle cx="4.5" cy="5" r="3.8" fill="#4a8ad8" stroke="#2f6ab0" stroke-width="0.6"/><circle cx="11.5" cy="11" r="3.8" fill="#4a8ad8" stroke="#2f6ab0" stroke-width="0.6"/></svg>
<svg style="left:787.80px;top:271.80px" width="12.8" height="12.8" viewBox="0 0 16 16"><circle cx="3.5" cy="6" r="2.6" fill="none" stroke="#3a8ad0" stroke-width="1.6"/><circle cx="12" cy="5" r="2.6" fill="none" stroke="#3a8ad0" stroke-width="1.6"/><path d="M6,6 H9.5 M4,9 L6,14 M11,8 L9,14" stroke="#3a8ad0" stroke-width="1.5"/><circle cx="6" cy="14" r="1.5" fill="#3a8ad0"/></svg>
<svg style="left:886.40px;top:273.00px" width="12" height="10" viewBox="0 0 12 10"><rect x="0.0" y="0.0" width="2.2" height="1.8" fill="#5a9ad8"/><rect x="0.0" y="2.5" width="2.2" height="1.8" fill="#5a9ad8"/><rect x="0.0" y="5.0" width="2.2" height="1.8" fill="#5a9ad8"/><rect x="0.0" y="7.5" width="2.2" height="1.8" fill="#5a9ad8"/><rect x="3.1" y="0.0" width="2.2" height="1.8" fill="#5a9ad8"/><rect x="3.1" y="2.5" width="2.2" height="1.8" fill="#5a9ad8"/><rect x="3.1" y="5.0" width="2.2" height="1.8" fill="#5a9ad8"/><rect x="3.1" y="7.5" width="2.2" height="1.8" fill="#5a9ad8"/><rect x="6.2" y="0.0" width="2.2" height="1.8" fill="#5a9ad8"/><rect x="6.2" y="2.5" width="2.2" height="1.8" fill="#5a9ad8"/><rect x="6.2" y="5.0" width="2.2" height="1.8" fill="#5a9ad8"/><rect x="6.2" y="7.5" width="2.2" height="1.8" fill="#5a9ad8"/><rect x="9.3" y="0.0" width="2.2" height="1.8" fill="#5a9ad8"/><rect x="9.3" y="2.5" width="2.2" height="1.8" fill="#5a9ad8"/><rect x="9.3" y="5.0" width="2.2" height="1.8" fill="#5a9ad8"/><rect x="9.3" y="7.5" width="2.2" height="1.8" fill="#5a9ad8"/></svg>
<div class="t" style="left:521.30px;top:293.66px;font-size:11.42px;color:#9a9a9a;font-family:'Liberation Mono', monospace;font-weight:normal;transform:scaleY(1.08);transform-origin:0 13.04px;-webkit-text-stroke:0.15px #9a9a9a;">Name</div>
<div class="t" style="left:639.90px;top:293.66px;font-size:11.42px;color:#9a9a9a;font-family:'Liberation Mono', monospace;font-weight:normal;transform:scaleY(1.08);transform-origin:0 13.04px;-webkit-text-stroke:0.15px #9a9a9a;">Type</div>
<div class="t" style="left:777.60px;top:293.66px;font-size:11.42px;color:#5a5a5a;font-family:'Liberation Mono', monospace;font-weight:normal;transform:scaleY(1.08);transform-origin:0 13.04px;">Value</div>
<div style="left:636px;top:292px;width:1px;height:116px;background:#ececec;"></div>
<div style="left:774.5px;top:292px;width:1px;height:116px;background:#ececec;"></div>
<div style="left:518.8px;top:314.8px;width:456.2px;height:21.6px;background:#0072e0;"></div>
<div style="left:636px;top:314.8px;width:1px;height:21.2px;background:#e6effa;"></div>
<div style="left:774.5px;top:314.8px;width:1px;height:21.2px;background:#e6effa;"></div>
<div class="t" style="left:548.00px;top:317.26px;font-size:11.42px;color:#eaf2fc;font-family:'Liberation Mono', monospace;font-weight:normal;transform:scaleY(1.08);transform-origin:0 13.04px;">x</div>
<div class="t" style="left:652.40px;top:317.26px;font-size:11.42px;color:#eaf2fc;font-family:'Liberation Mono', monospace;font-weight:normal;transform:scaleY(1.08);transform-origin:0 13.04px;">int</div>
<div class="t" style="left:789.60px;top:317.31px;font-size:12.75px;color:#eaf2fc;font-family:'Liberation Mono', monospace;font-weight:normal;transform:scaleY(1.08);transform-origin:0 13.39px;-webkit-text-stroke:0;">0</div>
<div class="t" style="left:548.00px;top:337.16px;font-size:11.42px;color:#2f2f2f;font-family:'Liberation Mono', monospace;font-weight:normal;transform:scaleY(1.08);transform-origin:0 13.04px;">a</div>
<div class="t" style="left:652.40px;top:337.16px;font-size:11.42px;color:#2f2f2f;font-family:'Liberation Mono', monospace;font-weight:normal;transform:scaleY(1.08);transform-origin:0 13.04px;">int</div>
<div class="t" style="left:789.60px;top:337.91px;font-size:12.75px;color:#2f2f2f;font-family:'Liberation Mono', monospace;font-weight:normal;transform:scaleY(1.08);transform-origin:0 13.39px;-webkit-text-stroke:0;">0</div>
<div class="t" style="left:548.00px;top:355.36px;font-size:11.42px;color:#2f2f2f;font-family:'Liberation Mono', monospace;font-weight:normal;transform:scaleY(1.08);transform-origin:0 13.04px;">b</div>
<div class="t" style="left:652.40px;top:355.36px;font-size:11.42px;color:#2f2f2f;font-family:'Liberation Mono', monospace;font-weight:normal;transform:scaleY(1.08);transform-origin:0 13.04px;">int</div>
<div class="t" style="left:789.60px;top:356.11px;font-size:12.75px;color:#2f2f2f;font-family:'Liberation Mono', monospace;font-weight:normal;transform:scaleY(1.08);transform-origin:0 13.39px;-webkit-text-stroke:0;">65535</div>
<div class="t" style="left:548.00px;top:373.56px;font-size:11.42px;color:#2f2f2f;font-family:'Liberation Mono', monospace;font-weight:normal;transform:scaleY(1.08);transform-origin:0 13.04px;">c</div>
<div class="t" style="left:652.40px;top:373.56px;font-size:11.42px;color:#2f2f2f;font-family:'Liberation Mono', monospace;font-weight:normal;transform:scaleY(1.08);transform-origin:0 13.04px;">int</div>
<div class="t" style="left:789.60px;top:374.31px;font-size:12.75px;color:#2f2f2f;font-family:'Liberation Mono', monospace;font-weight:normal;transform:scaleY(1.08);transform-origin:0 13.39px;-webkit-text-stroke:0;">-997972440</div>
<div class="t" style="left:548.00px;top:391.96px;font-size:11.42px;color:#2f2f2f;font-family:'Liberation Mono', monospace;font-weight:normal;transform:scaleY(1.08);transform-origin:0 13.04px;">exitVar</div>
<div class="t" style="left:652.40px;top:391.96px;font-size:11.42px;color:#2f2f2f;font-family:'Liberation Mono', monospace;font-weight:normal;transform:scaleY(1.08);transform-origin:0 13.04px;">volatile int</div>
<div class="t" style="left:789.60px;top:392.71px;font-size:12.75px;color:#2f2f2f;font-family:'Liberation Mono', monospace;font-weight:normal;transform:scaleY(1.08);transform-origin:0 13.39px;-webkit-text-stroke:0;">65535</div>
<svg style="left:534.20px;top:323.70px" width="13" height="7" viewBox="0 0 13 7"><g fill="none" stroke="#8a96a8" stroke-width="1.1"><path d="M2.2,0.6 Q0.4,3.5 2.2,6.4"/><path d="M3.4,2 L6.4,5.4 M6.4,2 L3.4,5.4"/><path d="M7.6,0.6 Q9.4,3.5 7.6,6.4"/><path d="M9.8,3 H12.4 M9.8,4.6 H12.4" stroke-width="0.9"/></g></svg>
<svg style="left:534.20px;top:343.60px" width="13" height="7" viewBox="0 0 13 7"><g fill="none" stroke="#3b5080" stroke-width="1.1"><path d="M2.2,0.6 Q0.4,3.5 2.2,6.4"/><path d="M3.4,2 L6.4,5.4 M6.4,2 L3.4,5.4"/><path d="M7.6,0.6 Q9.4,3.5 7.6,6.4"/><path d="M9.8,3 H12.4 M9.8,4.6 H12.4" stroke-width="0.9"/></g></svg>
<svg style="left:534.20px;top:361.80px" width="13" height="7" viewBox="0 0 13 7"><g fill="none" stroke="#3b5080" stroke-width="1.1"><path d="M2.2,0.6 Q0.4,3.5 2.2,6.4"/><path d="M3.4,2 L6.4,5.4 M6.4,2 L3.4,5.4"/><path d="M7.6,0.6 Q9.4,3.5 7.6,6.4"/><path d="M9.8,3 H12.4 M9.8,4.6 H12.4" stroke-width="0.9"/></g></svg>
<svg style="left:534.20px;top:380.00px" width="13" height="7" viewBox="0 0 13 7"><g fill="none" stroke="#3b5080" stroke-width="1.1"><path d="M2.2,0.6 Q0.4,3.5 2.2,6.4"/><path d="M3.4,2 L6.4,5.4 M6.4,2 L3.4,5.4"/><path d="M7.6,0.6 Q9.4,3.5 7.6,6.4"/><path d="M9.8,3 H12.4 M9.8,4.6 H12.4" stroke-width="0.9"/></g></svg>
<svg style="left:534.20px;top:398.40px" width="13" height="7" viewBox="0 0 13 7"><g fill="none" stroke="#3b5080" stroke-width="1.1"><path d="M2.2,0.6 Q0.4,3.5 2.2,6.4"/><path d="M3.4,2 L6.4,5.4 M6.4,2 L3.4,5.4"/><path d="M7.6,0.6 Q9.4,3.5 7.6,6.4"/><path d="M9.8,3 H12.4 M9.8,4.6 H12.4" stroke-width="0.9"/></g></svg>
<div style="left:518.8px;top:447.6px;width:456.2px;height:2.6px;background:#f3f2f1;"></div>
<div class="t" style="left:520.60px;top:449.71px;font-size:12.75px;color:#2f2f2f;font-family:'Liberation Mono', monospace;font-weight:normal;transform:scaleY(1.08);transform-origin:0 13.39px;">0</div>
<div class="t" style="left:520.60px;top:467.26px;font-size:11.42px;color:#2f2f2f;font-family:'Liberation Mono', monospace;transform:scaleY(1.08);transform-origin:0 13.04px;"><b style="-webkit-text-stroke:0.05px">Hex:</b> <span style="font-size:12.62px">00000000,</span> <b style="-webkit-text-stroke:0.05px">Dec:</b> <span style="font-size:12.62px">0,</span> <b style="-webkit-text-stroke:0.05px">Oct:</b> <span style="font-size:12.62px">0</span></div>
<div class="t" style="left:520.60px;top:483.86px;font-size:11.42px;color:#2f2f2f;font-family:'Liberation Mono', monospace;transform:scaleY(1.08);transform-origin:0 13.04px;"><b style="-webkit-text-stroke:0.05px">Bin:</b> <span style="font-size:12.62px">0000,0000,0000,0000,0000,0000,0000,0000</span></div>
<div class="t" style="left:520.60px;top:500.56px;font-size:11.42px;color:#2f2f2f;font-family:'Liberation Mono', monospace;transform:scaleY(1.08);transform-origin:0 13.04px;"><b style="-webkit-text-stroke:0.05px">Size:</b> <span style="font-size:12.62px">4</span> bytes, <b style="-webkit-text-stroke:0.05px">Type:</b> int</div>
<div style="left:518.8px;top:513.1px;width:456.2px;height:8.9px;background:#ffffff;"></div>
<div style="left:518.8px;top:513.1px;width:456.2px;height:1px;background:#e4e3e1;"></div>
<div style="left:520.8px;top:515.3px;width:460px;height:5.8px;background:#8a8a8a;border-radius:3px"></div>
</body></html>
